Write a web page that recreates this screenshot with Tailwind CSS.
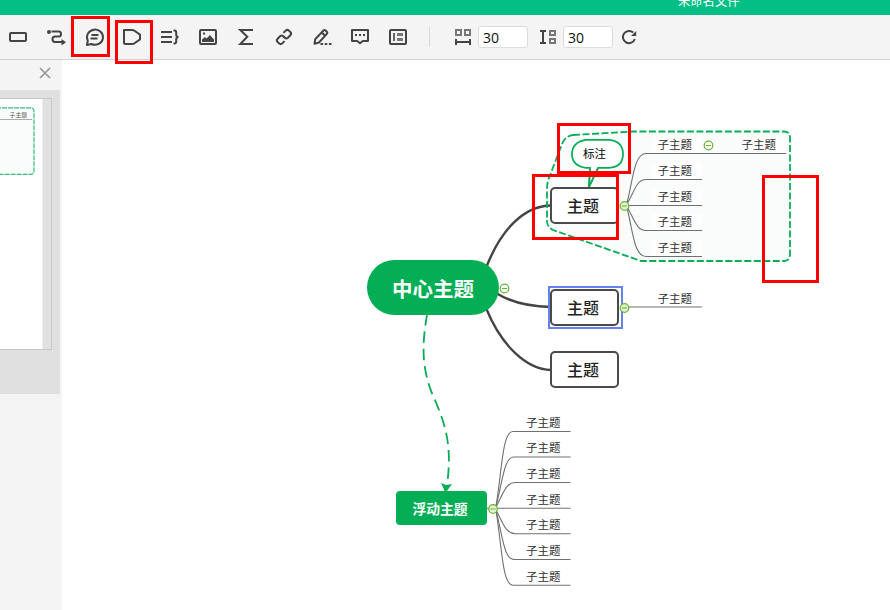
<!DOCTYPE html>
<html lang="zh-CN">
<head>
<meta charset="utf-8">
<title>未命名文件</title>
<script src="https://cdn.jsdelivr.net/npm/@tailwindcss/browser@4"></script>
</head>
<body class="relative flex h-[610px] w-[890px] flex-col overflow-hidden bg-white font-['Noto_Sans_CJK_SC',sans-serif] text-[#303030]">

<header class="flex h-[15px] shrink-0 items-end overflow-hidden bg-[#03bf86] pl-[678px]">
  <span class="mb-[4px] whitespace-nowrap text-[12.3px] leading-[20px] text-white">未命名文件</span>
</header>

<div class="flex h-[45px] shrink-0 items-center border-b border-[#d0d0d0] bg-[#f4f4f4]">
  <div class="-ml-px flex [&>svg]:h-[38px] [&>svg]:w-[38px]">
    <svg viewBox="0 0 38 38" fill="none" stroke="#444" stroke-width="2"><rect x="11" y="15" width="16" height="8" rx="1"/></svg>
    <svg viewBox="0 0 38 38" fill="none" stroke="#444" stroke-width="2"><circle cx="12" cy="14" r="2" fill="#444" stroke="none"/><path d="M14.500 13.500H22q2 0 2 2.500t-2 2.500h-4q-2.500 0-2.500 2.700t2.500 2.700h7"/><path d="M24.500 21v6.500l4.500-3.300z" fill="#444" stroke="none"/></svg>
    <svg viewBox="0 0 38 38" fill="none" stroke="#444" stroke-width="2" stroke-linejoin="round"><path d="M12 27l.8-4.500A8 7.600 0 1 1 16.500 26z"/><path d="M16.500 17h7M15.500 20.500h7"/></svg>
    <svg viewBox="0 0 38 38" fill="none" stroke="#444" stroke-width="2" stroke-linejoin="round"><path d="M11 12h8.200q1.300 0 2.300.7l5.500 3.900v4.800L21.500 25.200q-1 .8-2.300.8h-6.700q-1.500 0-1.500-1.500z"/></svg>
    <svg viewBox="0 0 38 38" fill="none" stroke="#444" stroke-width="2"><path d="M10 14h11M10 19h11M10 24h11M22.500 12.500h1q1.700 0 1.700 2v2q0 2.500 2.300 2.500q-2.300 0-2.300 2.500v2q0 2-1.700 2h-1"/></svg>
    <svg viewBox="0 0 38 38" fill="none" stroke="#444" stroke-width="2"><rect x="11" y="12" width="16" height="14" rx="1"/><path d="M13 24v-2.500l3-2.500 1.500 1.500 3.500-3.500 2 2.500 2 2V24z" fill="#444" stroke="none"/><path d="M14 15.500h2"/></svg>
    <svg viewBox="0 0 38 38" fill="none" stroke="#444" stroke-width="2"><path d="M26 12H13.300l7 6.700-7 7.300H26"/></svg>
    <svg viewBox="0 0 38 38" fill="none" stroke="#444" stroke-width="2"><g transform="rotate(-45 19 19)"><path d="M16.500 22.300h-3.200q-2.300 0-2.300-2.300v-2q0-2.300 2.300-2.300h3.400q2.300 0 2.300 2.300v1.800"/><path d="M21.500 15.700h3.200q2.300 0 2.300 2.300v2q0 2.300-2.300 2.300h-3.400q-2.300 0-2.300-2.300v-1.800"/></g></svg>
    <svg viewBox="0 0 38 38" fill="none" stroke="#444" stroke-width="2" stroke-linejoin="round"><path d="M11.500 25.800l.7-4.600 8.300-8.700q1-1 2 0l1.300 1.300q1 1 0 2L16 24.500zM18.800 14.500l3 3"/><path d="M17.500 26h11" stroke-dasharray="2.600 1.600"/></svg>
    <svg viewBox="0 0 38 38" fill="none" stroke="#444" stroke-width="2" stroke-linejoin="round"><path d="M11 12h16v11h-5.200L19 25.300l-2.800-2.300H11z"/><path d="M14 17h2M18 17h2M22 17h2"/></svg>
    <svg viewBox="0 0 38 38" fill="none" stroke="#444" stroke-width="2"><rect x="11" y="12" width="16" height="14" rx="1"/><path d="M15 15v8" stroke="#666"/><path d="M18 16.500h6M18 21.500h6" stroke="#777" stroke-width="3"/></svg>
  </div>
  <div class="ml-[12px] h-[20px] w-px bg-[#d9d9d9]"></div>
  <svg class="ml-[25px] h-[16px] w-[16px]" viewBox="0 0 16 16" fill="none"><path d="M1 1h5v5H1zM10 1h5v5h-5z" stroke="#777" stroke-width="2"/><path d="M1 10v6M15 10v6M1 13h14" stroke="#444" stroke-width="2"/></svg>
  <div class="ml-[7px] flex h-[22px] w-[50px] items-center rounded-[3px] border border-[#dcdcdc] bg-white pl-[4px] font-['Open_Sans','Noto_Sans',sans-serif] text-[14px] text-[#111]">30</div>
  <svg class="ml-[12px] h-[16px] w-[16px]" viewBox="0 0 16 16" fill="none"><path d="M0 2h6M0 14h6M3 2v12" stroke="#444" stroke-width="2"/><path d="M10 2h5v4h-5zM10 10h5v4h-5z" stroke="#777" stroke-width="2"/></svg>
  <div class="ml-[7px] flex h-[22px] w-[50px] items-center rounded-[3px] border border-[#dcdcdc] bg-white pl-[4px] font-['Open_Sans','Noto_Sans',sans-serif] text-[14px] text-[#111]">30</div>
  <svg class="ml-[8px] h-[16px] w-[16px]" viewBox="0 0 16 16" fill="none"><path d="M13.800 10A6.100 6.100 0 1 1 12.200 3.600" stroke="#444" stroke-width="2"/><path d="M15.200 2v5H10z" fill="#444"/></svg>
</div>

<div class="flex min-h-0 flex-1">
  <aside class="flex w-[62px] shrink-0 flex-col bg-[#f4f4f4]">
    <div class="flex h-[30px] items-center justify-end pr-[11px] pb-[4px]">
      <svg class="h-[12px] w-[12px]" viewBox="0 0 12 12" stroke="#999" stroke-width="1.700"><path d="M1 1l10 10M11 1L1 11"/></svg>
    </div>
    <div class="h-[304px] w-[60px] bg-[#e0e0e0] pt-[8px]">
      <div class="h-[252px] w-[52px] border border-l-0 border-[#c8c8c8]">
        <div class="h-[250px] w-[43px] border-r border-[#eee] bg-white pt-[8px]">
          <svg class="h-[70px] w-[36px]" viewBox="0 107 36 70"><path d="M-4 107.800H30.500q3.500 0 3.500 3.500V171q0 3.300-3.500 3.300H-4" fill="#fafcfb" stroke="#35bd79" stroke-width="1.200" stroke-dasharray="5 1"/><path d="M0 119.500H32" stroke="#aaa"/><text x="9.500" y="117" font-size="5.900" fill="#555" font-family="Noto Sans CJK SC">子主题</text></svg>
        </div>
      </div>
    </div>
  </aside>

  <main class="relative flex-1 overflow-hidden bg-white">
    <!-- the map layer uses window coordinates -->
    <div class="absolute -left-[62px] -top-[60px] h-[610px] w-[890px] text-[11.500px] leading-[16px]">
      <svg class="absolute inset-0" width="890" height="610" viewBox="0 0 890 610" fill="none">
        <path d="M573 135L633 131.500H784Q790 131.500 790 138V254Q790 261 784 261H641L553 230Q547 227 547 221V190Q547 182 549 178L562 144Q565 136 573 135Z" fill="#fafcfb"/>
        <path d="M652 137h50v16h-50zM652 163h50v16h-50zM652 189h50v16h-50zM652 214h50v16h-50zM652 240h50v16h-50zM736 137h50v16h-50z" fill="#fff" fill-opacity=".7"/>
        <g stroke="#444" stroke-width="2.400">
          <path d="M486 268C501 229 524 206 551 205.500"/>
          <path d="M496 293C512 303 530 306.500 551 307"/>
          <path d="M486 308C501 345 526 369.500 551 370"/>
        </g>
        <path d="M573 135L633 131.500H784Q790 131.500 790 138V254Q790 261 784 261H641L553 230Q547 227 547 221V190Q547 182 549 178L562 144Q565 136 573 135Z" stroke="#08ad58" stroke-width="1.800" stroke-dasharray="7 2.500"/>
        <g stroke="#707070" stroke-width="1.100">
          <path d="M627 203C633 180 634 153.500 646 153.500H786"/>
          <path d="M627 204C634 193 636 179.500 646 179.500H702"/>
          <path d="M629 205.500H702"/>
          <path d="M627 207C634 218 636 230.500 646 230.500H702"/>
          <path d="M627 208C633 231 634 256.500 646 256.500H702"/>
          <path d="M629 307H702"/>
          <path d="M496 506C502 472 502 431.500 513 431.500H570.500"/>
          <path d="M496 506C503 480 504 457 514 457H570.500"/>
          <path d="M496 507C503 494 506 482.500 515 482.500H570.500"/>
          <path d="M486 508.200H570.500"/>
          <path d="M496 510C503 523 506 533.800 515 533.800H570.500"/>
          <path d="M496 511C503 537 504 559.500 514 559.500H570.500"/>
          <path d="M496 511C502 545 502 585.200 513 585.200H570.500"/>
        </g>
        <path d="M427 315C422 344 421 369 434 398C447 427 452 449 447 485" stroke="#08ad58" stroke-width="1.800" stroke-dasharray="11.500 6" stroke-dashoffset="1"/>
        <path d="M441 483l5 2 6-1-6.500 9z" fill="#08ad58"/>
        <path d="M586 139.800H609Q623 141 623 154T609 167.800H598L589 187L590 167.800H586Q572 166 572 154T586 139.800Z" fill="#fff" stroke="#08ad58" stroke-width="1.700"/>
      </svg>

      <div class="absolute left-[583px] top-[145px] text-black">标注</div>
      <div class="absolute left-[367px] top-[260px] flex h-[55px] w-[132px] items-center justify-center rounded-[28px] bg-[#03ae54] text-[20.500px] font-bold text-white">中心主题</div>
      <div class="absolute left-[396px] top-[491px] flex h-[34px] w-[91px] items-center justify-center rounded-[4px] bg-[#03ae54] pr-[3px] text-[13.800px] font-bold text-white">浮动主题</div>

      <div class="absolute left-[550px] top-[187px] flex h-[37px] w-[69px] items-center rounded-[5px] border-2 border-[#4a4a4a] bg-white pb-[2px] pl-[15px] text-[16px] font-medium text-[#222]">主题</div>
      <div class="absolute left-[547.500px] top-[286px] h-[43px] w-[75px] border-2 border-[#6482ea]"></div>
      <div class="absolute left-[550px] top-[289px] flex h-[37px] w-[69px] items-center rounded-[5px] border-2 border-[#4a4a4a] bg-white pb-[2px] pl-[15px] text-[16px] font-medium text-[#222]">主题</div>
      <div class="absolute left-[550px] top-[351px] flex h-[37px] w-[69px] items-center rounded-[5px] border-2 border-[#4a4a4a] bg-white pb-[2px] pl-[15px] text-[16px] font-medium text-[#222]">主题</div>

      <div class="absolute left-[657.500px] top-[136px]">子主题</div>
      <div class="absolute left-[741.500px] top-[136px]">子主题</div>
      <div class="absolute left-[657.500px] top-[162px]">子主题</div>
      <div class="absolute left-[657.500px] top-[188px]">子主题</div>
      <div class="absolute left-[657.500px] top-[213px]">子主题</div>
      <div class="absolute left-[657.500px] top-[239px]">子主题</div>
      <div class="absolute left-[657.500px] top-[290px]">子主题</div>
      <div class="absolute left-[526px] top-[414px]">子主题</div>
      <div class="absolute left-[526px] top-[439px]">子主题</div>
      <div class="absolute left-[526px] top-[465px]">子主题</div>
      <div class="absolute left-[526px] top-[491px]">子主题</div>
      <div class="absolute left-[526px] top-[516px]">子主题</div>
      <div class="absolute left-[526px] top-[542px]">子主题</div>
      <div class="absolute left-[526px] top-[568px]">子主题</div>

      <svg class="absolute inset-0" width="890" height="610" viewBox="0 0 890 610" stroke="#68b436" stroke-width="1.200">
        <g fill="#fff"><circle cx="504.500" cy="288.500" r="4.300"/><circle cx="708.500" cy="145.500" r="4.300"/></g>
        <g fill="#dff3cc"><circle cx="624.500" cy="206" r="4.300"/><circle cx="624.500" cy="308" r="4.300"/><circle cx="493" cy="509" r="4.300"/></g>
        <path d="M502 288.500h5M706 145.500h5M622 206h5M622 308h5M490.500 509h5"/>
        <path d="M589 187L598 168.500M589 187L590 168.500" stroke="#08ad58" stroke-width="1.700"/>
      </svg>
    </div>
  </main>
</div>

<!-- highlight frames -->
<div class="absolute left-[71px] top-[16px] h-[41px] w-[39px] border-3 border-[#fe0000]"></div>
<div class="absolute left-[115px] top-[20px] h-[44px] w-[38px] border-3 border-[#fe0000]"></div>
<div class="absolute left-[557px] top-[123px] h-[51px] w-[74px] border-3 border-[#fe0000]"></div>
<div class="absolute left-[532px] top-[174px] h-[66px] w-[87px] border-3 border-[#fe0000]"></div>
<div class="absolute left-[762px] top-[175px] h-[108px] w-[57px] border-3 border-[#fe0000]"></div>
</body>
</html>
